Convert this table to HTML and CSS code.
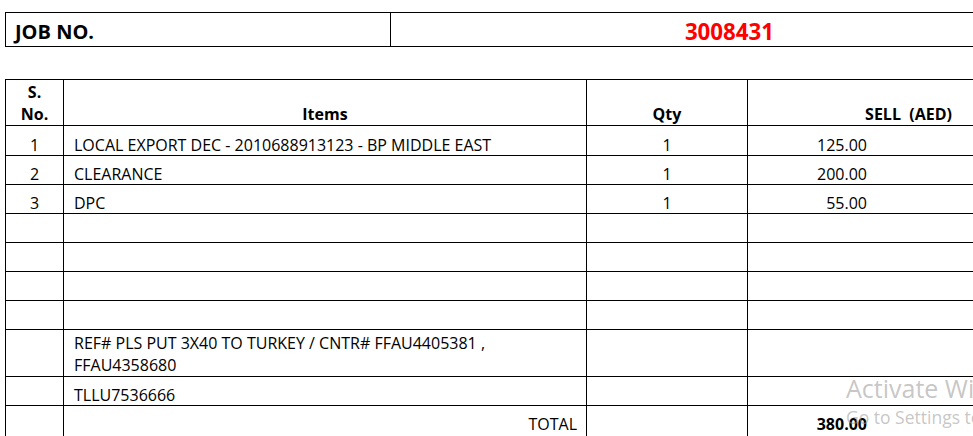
FILE: index.html
```html
<!DOCTYPE html>
<html>
<head>
<meta charset="utf-8">
<link rel="stylesheet" href="styles.css">
</head>
<body>
<div class="sheet">
  <table class="job">
    <tr>
      <td class="job-label">JOB NO.</td>
      <td class="job-value">3008431</td>
    </tr>
  </table>

  <table class="items">
    <colgroup>
      <col class="c-sno">
      <col class="c-item">
      <col class="c-qty">
      <col class="c-sell">
    </colgroup>
    <tr class="head">
      <th class="sno">S.<br>No.</th>
      <th>Items</th>
      <th>Qty</th>
      <th class="sell-h">SELL&nbsp; (AED)</th>
    </tr>
    <tr class="row first">
      <td class="sno">1</td>
      <td class="item">LOCAL EXPORT DEC - 2010688913123 - BP MIDDLE EAST</td>
      <td class="qty">1</td>
      <td class="amt">125.00</td>
    </tr>
    <tr class="row">
      <td class="sno">2</td>
      <td class="item">CLEARANCE</td>
      <td class="qty">1</td>
      <td class="amt">200.00</td>
    </tr>
    <tr class="row">
      <td class="sno">3</td>
      <td class="item">DPC</td>
      <td class="qty">1</td>
      <td class="amt">55.00</td>
    </tr>
    <tr class="row"><td></td><td></td><td></td><td></td></tr>
    <tr class="row"><td></td><td></td><td></td><td></td></tr>
    <tr class="row"><td></td><td></td><td></td><td></td></tr>
    <tr class="row"><td></td><td></td><td></td><td></td></tr>
    <tr class="row tall">
      <td></td>
      <td class="item">REF# PLS PUT 3X40 TO TURKEY / CNTR# FFAU4405381 ,<br>FFAU4358680</td>
      <td></td>
      <td></td>
    </tr>
    <tr class="row">
      <td></td>
      <td class="item">TLLU7536666</td>
      <td></td>
      <td></td>
    </tr>
    <tr class="row total">
      <td></td>
      <td class="total-label">TOTAL</td>
      <td></td>
      <td class="amt bold">380.00</td>
    </tr>
  </table>
</div>
<div class="watermark">
  <div class="wm-title">Activate Windows</div>
  <div class="wm-sub">Go to Settings to activate Windows.</div>
</div>
</body>
</html>
```

FILE: styles.css
```css
html, body {
  margin: 0;
  padding: 0;
  background: #ffffff;
  overflow: hidden;
  height: 436px;
}

body {
  font-family: "Open Sans", "Liberation Sans", sans-serif;
  color: #000;
  position: relative;
}

.sheet {
  padding: 12px 0 0 5px;
  width: 1070px;
}

table {
  border-collapse: collapse;
  table-layout: fixed;
}

td, th {
  border: 1px solid #000;
  padding: 0;
}

/* Job number table */
.job {
  width: 1064px;
}

.job td {
  height: 34px;
  box-sizing: border-box;
  vertical-align: bottom;
  padding-bottom: 2px;
  font-weight: 700;
  font-size: 20px;
  line-height: 24px;
}

.job .job-label {
  width: 385px;
  padding-left: 9px;
}

.job .job-value {
  text-align: center;
  color: #ff0000;
  font-size: 22.3px;
}

/* Items table */
.items {
  margin-top: 32px;
  width: 1064px;
  font-size: 16px;
}

.c-sno { width: 58px; }
.c-item { width: 523px; }
.c-qty { width: 161px; }
.c-sell { width: 322px; }

.items th {
  height: 46px;
  box-sizing: border-box;
  font-weight: 700;
  vertical-align: bottom;
  text-align: center;
  line-height: 22px;
  padding-bottom: 0;
}

.items td {
  vertical-align: bottom;
  line-height: 20px;
  padding-bottom: 0;
}

.row td {
  height: 29px;
  box-sizing: border-box;
}

.row.first td {
  height: 30px;
}

.row.tall td {
  height: 47px;
  line-height: 22px;
}

.sno {
  text-align: center;
}

.item {
  padding-left: 10px;
}

.qty {
  text-align: center;
}

.amt {
  text-align: right;
  padding-right: 202px;
}

.total-label {
  text-align: right;
  padding-right: 9px;
}

.bold {
  font-weight: 700;
}

.row.total td {
  height: 31px;
  vertical-align: top;
  padding-top: 8px;
}

/* Windows activation watermark overlay */
.watermark {
  position: absolute;
  left: 846px;
  top: 373px;
  font-family: "Open Sans", "Liberation Sans", sans-serif;
  color: rgba(150, 150, 150, 0.55);
  white-space: nowrap;
  pointer-events: none;
}

.wm-title {
  font-size: 25px;
  line-height: 30px;
}

.wm-sub {
  margin-top: 3px;
  font-size: 17.5px;
  line-height: 22px;
}
```
